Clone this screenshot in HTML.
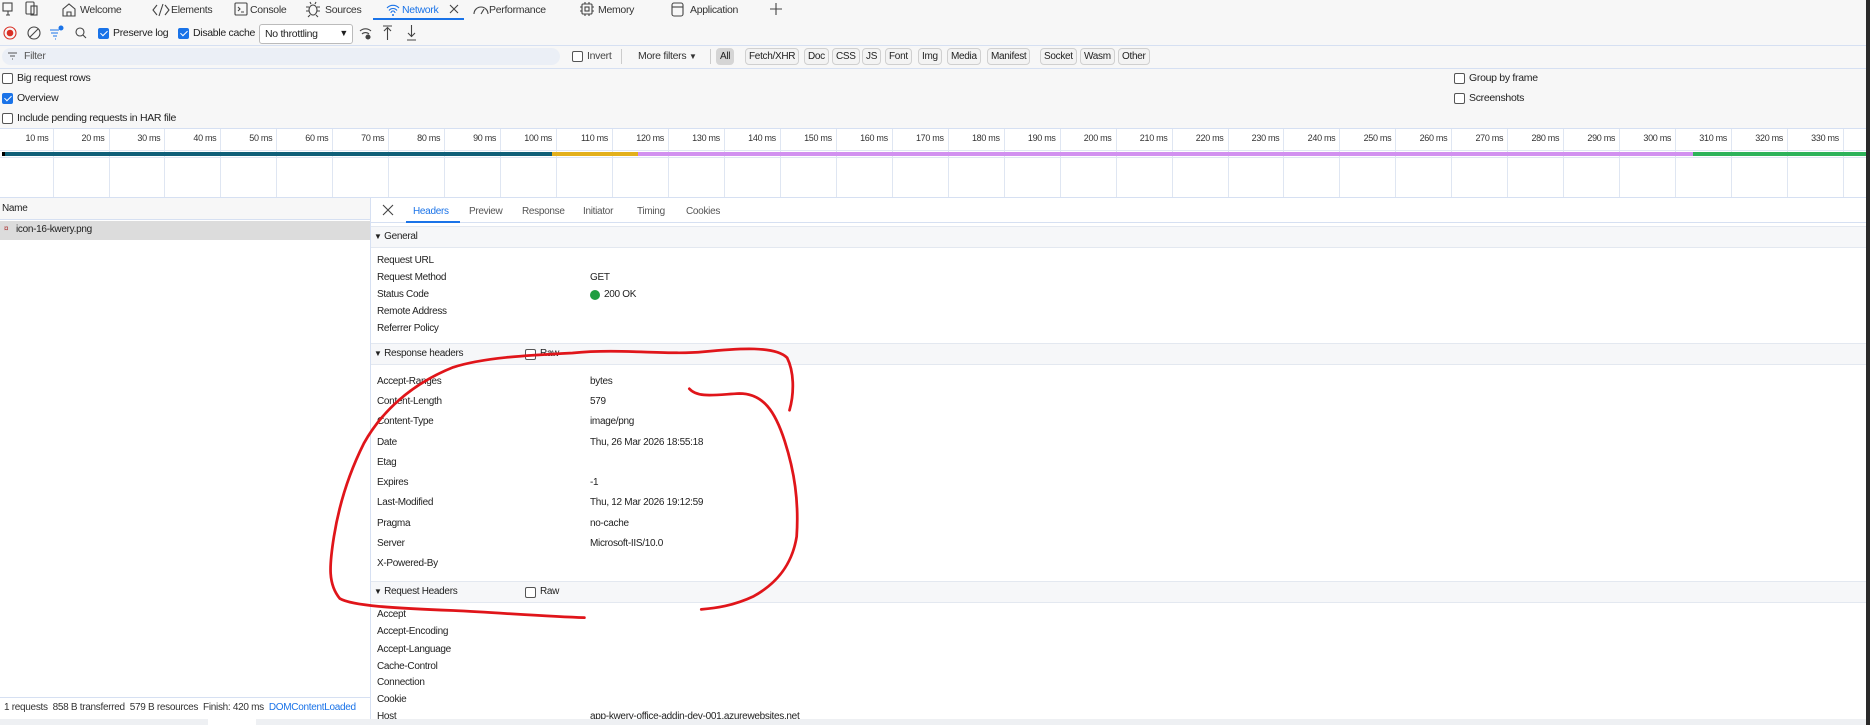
<!DOCTYPE html>
<html><head><meta charset="utf-8"><style>
*{box-sizing:border-box;margin:0;padding:0}
body{width:1870px;height:725px;overflow:hidden;background:#fff;font-family:"Liberation Sans",sans-serif;font-size:10.5px;color:#1f1f1f;position:relative;letter-spacing:-0.3px}
.a{position:absolute;white-space:nowrap}
.cb{position:absolute;width:11px;height:11px;border:1px solid #555;border-radius:2px;background:#fff}
.cbc{position:absolute;width:11px;height:11px;border-radius:2px;background:#1a73e8}
.cbc:after{content:"";position:absolute;left:3.5px;top:1px;width:3px;height:6px;border:solid #fff;border-width:0 1.6px 1.6px 0;transform:rotate(45deg)}
.fb{position:absolute;top:48px;height:17px;border:1px solid #d0d0d0;border-radius:4px;background:#f3f3f3;font-size:10px;line-height:15px;padding:0 3px;color:#222}
.lbl{position:absolute;left:377px;font-size:10px;color:#222}
.val{position:absolute;left:590px;font-size:10px;color:#222}
.sec{position:absolute;left:371px;right:4px;background:#f6f7f9;border-top:1px solid #e3e8f0;border-bottom:1px solid #e3e8f0}
</style></head><body>
<div class="a" style="left:0;top:0;width:1870px;height:129px;background:#f7f7f7"></div>
<div class="a" style="left:0;top:45px;width:1870px;height:1px;background:#d6e0f2"></div>
<div class="a" style="left:0;top:68px;width:1870px;height:1px;background:#d6e0f2"></div>
<div class="a" style="left:0;top:128px;width:1870px;height:1px;background:#d6e0f2"></div>

<svg class="a" style="left:0;top:0" width="800" height="22" fill="none" stroke="#444" stroke-width="1.1">
<rect x="3" y="3" width="9" height="8"/><path d="M8 11v4M6 15h4"/>
<rect x="26" y="2" width="8" height="12" rx="1"/><rect x="31" y="6" width="6" height="9"/>
<path d="M63 16V9l6-5 6 5v7zM67 16v-4h4v4"/>
<path d="M157 5l-4 5 4 5M165 5l4 5-4 5M163 4l-4 12"/>
<rect x="235" y="3" width="12" height="12" rx="1"/><path d="M238 7l2 2-2 2M241 12h3"/>
<ellipse cx="313" cy="10" rx="4" ry="5"/><path d="M309 7h-3M317 7h3M309 11h-3M317 11h3M310 15l-2 2M316 15l2 2M311 4l-1-2M315 4l1-2"/>
<path d="M387 8a8 8 0 0 1 12 0M389 10.5a5 5 0 0 1 8 0M391 13a2 2 0 0 1 4 0" stroke="#1a73e8"/><circle cx="393" cy="15" r="1" fill="#1a73e8" stroke="none"/>
<path d="M450 5l8 8M458 5l-8 8"/>
<path d="M474 14a7 7 0 0 1 14 0M481 14l3-5"/>
<rect x="582" y="4" width="10" height="10" rx="1"/><rect x="585" y="7" width="4" height="4"/><path d="M580 7h2M580 11h2M592 7h2M592 11h2M585 2v2M589 2v2M585 14v2M589 14v2"/>
<rect x="672" y="3" width="11" height="13" rx="2"/><path d="M672 7h11"/>
<path d="M776 3v12M770 9h12"/>
</svg>
<div class="a" style="left:80px;top:4px;color:#333">Welcome</div>
<div class="a" style="left:171px;top:4px;color:#333">Elements</div>
<div class="a" style="left:250px;top:4px;color:#333">Console</div>
<div class="a" style="left:325px;top:4px;color:#333">Sources</div>
<div class="a" style="left:402px;top:4px;color:#1a73e8">Network</div>
<div class="a" style="left:489px;top:4px;color:#333">Performance</div>
<div class="a" style="left:598px;top:4px;color:#333">Memory</div>
<div class="a" style="left:690px;top:4px;color:#333">Application</div>
<div class="a" style="left:373px;top:18px;width:91px;height:2px;background:#1a73e8"></div>

<svg class="a" style="left:0;top:22px" width="430" height="22" fill="none" stroke="#444" stroke-width="1.1">
<circle cx="10" cy="11" r="6" stroke="#d93025"/><circle cx="10" cy="11" r="3.3" fill="#d93025" stroke="none"/>
<circle cx="34" cy="11" r="6"/><path d="M30 15l8-8"/>
<path d="M50 8h9M51 11h7M53 14h4M55 17h1" stroke="#1a73e8"/><circle cx="61" cy="6" r="2.5" fill="#1a73e8" stroke="none"/>
<circle cx="80" cy="10" r="4"/><path d="M83 13l3 3"/>
<path d="M360 9a8 8 0 0 1 11 0M362 12a5 5 0 0 1 7 0"/><circle cx="368" cy="15" r="2" fill="#444"/>
<path d="M383 4h9M387.5 6v12M384 9l3.5-3.5 3.5 3.5"/>
<path d="M407 18h9M411.5 3v12M408 11l3.5 3.5 3.5-3.5"/>
</svg>
<div class="cbc" style="left:98px;top:28px"></div><div class="a" style="left:113px;top:27px">Preserve log</div>
<div class="cbc" style="left:178px;top:28px"></div><div class="a" style="left:193px;top:27px">Disable cache</div>
<div class="a" style="left:259px;top:24px;width:94px;height:20px;border:1px solid #bbb;border-radius:3px;background:#fff;padding:3px 5px">No throttling<span style="position:absolute;right:4px;top:3px;font-size:9px">▼</span></div>

<div class="a" style="left:2px;top:48px;width:558px;height:17px;background:#ebeff6;border-radius:9px"></div>
<svg class="a" style="left:7px;top:51px" width="12" height="10" stroke="#555" stroke-width="1.1"><path d="M1 2h9M3 5h5M5 8h1"/></svg>
<div class="a" style="left:24px;top:50px;color:#555">Filter</div>
<div class="cb" style="left:572px;top:51px"></div><div class="a" style="left:587px;top:50px;color:#444">Invert</div>
<div class="a" style="left:621px;top:49px;width:1px;height:15px;background:#ccc"></div>
<div class="a" style="left:638px;top:50px;color:#333">More filters <span style="font-size:8px">▼</span></div>
<div class="a" style="left:710px;top:49px;width:1px;height:15px;background:#ccc"></div>
<div class="fb" style="left:716px;background:#d5d5d5;border-color:#d5d5d5">All</div>
<div class="fb" style="left:745px">Fetch/XHR</div>
<div class="fb" style="left:804px">Doc</div>
<div class="fb" style="left:832px">CSS</div>
<div class="fb" style="left:862px">JS</div>
<div class="fb" style="left:885px">Font</div>
<div class="fb" style="left:918px">Img</div>
<div class="fb" style="left:947px">Media</div>
<div class="fb" style="left:987px">Manifest</div>
<div class="fb" style="left:1040px">Socket</div>
<div class="fb" style="left:1080px">Wasm</div>
<div class="fb" style="left:1118px">Other</div>

<div class="cb" style="left:2px;top:73px"></div><div class="a" style="left:17px;top:72px">Big request rows</div>
<div class="cbc" style="left:2px;top:93px"></div><div class="a" style="left:17px;top:92px">Overview</div>
<div class="cb" style="left:2px;top:113px"></div><div class="a" style="left:17px;top:112px">Include pending requests in HAR file</div>
<div class="cb" style="left:1454px;top:73px"></div><div class="a" style="left:1469px;top:72px">Group by frame</div>
<div class="cb" style="left:1454px;top:93px"></div><div class="a" style="left:1469px;top:92px">Screenshots</div>

<div id="tl"></div>
<div class="a" style="left:0;top:150px;width:1866px;height:1px;background:#dfe6f2"></div>
<div class="a" style="left:2px;top:152px;width:550px;height:4px;background:#0f5f78"></div>
<div class="a" style="left:2px;top:152px;width:3px;height:4px;background:#000"></div>
<div class="a" style="left:552px;top:152px;width:86px;height:4px;background:#e3b01d"></div>
<div class="a" style="left:638px;top:152px;width:1055px;height:4px;background:#d291f0"></div>
<div class="a" style="left:1693px;top:152px;width:173px;height:4px;background:#2eb35a"></div>
<div class="a" style="left:0;top:157px;width:1866px;height:1px;background:#dfe6f2"></div>
<div class="a" style="left:0;top:197px;width:1870px;height:1px;background:#d6e0f2"></div>
<div class="a" style="left:1866px;top:0;width:4px;height:725px;background:#2a2a2a"></div>

<div class="a" style="left:0;top:198px;width:371px;height:22px;background:#f7f7f7;border-bottom:1px solid #d6e0f2"></div>
<div class="a" style="left:2px;top:203px;font-size:10px">Name</div>
<div class="a" style="left:0;top:221px;width:371px;height:19px;background:#dcdcdc"></div>
<div class="a" style="left:4px;top:224px;font-size:8px;color:#a33">¤</div>
<div class="a" style="left:16px;top:224px;font-size:10px">icon-16-kwery.png</div>
<div class="a" style="left:0;top:697px;width:371px;height:1px;background:#d6e0f2"></div>
<div class="a" style="left:0;top:698px;width:371px;height:20px;background:#fff"></div>
<div class="a" style="left:4px;top:702px;font-size:10px;color:#333;width:366px;overflow:hidden">1 requests &nbsp;858 B transferred &nbsp;579 B resources &nbsp;Finish: 420 ms &nbsp;<span style="color:#1a73e8">DOMContentLoaded</span></div>
<div class="a" style="left:0;top:719px;width:1866px;height:6px;background:#eef0f3"></div>
<div class="a" style="left:208px;top:719px;width:48px;height:6px;background:#fff"></div>

<div class="a" style="left:370px;top:198px;width:1px;height:521px;background:#d6e0f2"></div>
<div class="a" style="left:371px;top:198px;width:1495px;height:25px;background:#fff;border-bottom:1px solid #d6e0f2"></div>
<svg class="a" style="left:382px;top:204px" width="12" height="12" stroke="#444" stroke-width="1.1"><path d="M1 1l10 10M11 1L1 11"/></svg>
<div class="a" style="left:413px;top:206px;color:#1a73e8;font-size:10px">Headers</div>
<div class="a" style="left:406px;top:221px;width:54px;height:2px;background:#1a73e8"></div>
<div class="a" style="left:469px;top:206px;color:#555;font-size:10px">Preview</div>
<div class="a" style="left:522px;top:206px;color:#555;font-size:10px">Response</div>
<div class="a" style="left:583px;top:206px;color:#555;font-size:10px">Initiator</div>
<div class="a" style="left:637px;top:206px;color:#555;font-size:10px">Timing</div>
<div class="a" style="left:686px;top:206px;color:#555;font-size:10px">Cookies</div>

<div class="sec" style="top:226px;height:22px"></div>
<div class="a" style="left:374px;top:231px;font-size:10px"><span style="font-size:8px">▼</span> General</div>
<div class="lbl" style="top:255px">Request URL</div>
<div class="lbl" style="top:272px">Request Method</div><div class="val" style="top:272px">GET</div>
<div class="lbl" style="top:289px">Status Code</div>
<div class="a" style="left:590px;top:290px;width:10px;height:10px;border-radius:50%;background:#1e9e3f"></div>
<div class="a" style="left:604px;top:289px;font-size:10px">200 OK</div>
<div class="lbl" style="top:306px">Remote Address</div>
<div class="lbl" style="top:323px">Referrer Policy</div>

<div class="sec" style="top:343px;height:22px"></div>
<div class="a" style="left:374px;top:348px;font-size:10px"><span style="font-size:8px">▼</span> Response headers</div>
<div class="cb" style="left:525px;top:349px"></div><div class="a" style="left:540px;top:348px;font-size:10px">Raw</div>
<div class="lbl" style="top:376px">Accept-Ranges</div><div class="val" style="top:376px">bytes</div>
<div class="lbl" style="top:396px">Content-Length</div><div class="val" style="top:396px">579</div>
<div class="lbl" style="top:416px">Content-Type</div><div class="val" style="top:416px">image/png</div>
<div class="lbl" style="top:437px">Date</div><div class="val" style="top:437px">Thu, 26 Mar 2026 18:55:18</div>
<div class="lbl" style="top:457px">Etag</div>
<div class="lbl" style="top:477px">Expires</div><div class="val" style="top:477px">-1</div>
<div class="lbl" style="top:497px">Last-Modified</div><div class="val" style="top:497px">Thu, 12 Mar 2026 19:12:59</div>
<div class="lbl" style="top:518px">Pragma</div><div class="val" style="top:518px">no-cache</div>
<div class="lbl" style="top:538px">Server</div><div class="val" style="top:538px">Microsoft-IIS/10.0</div>
<div class="lbl" style="top:558px">X-Powered-By</div>

<div class="sec" style="top:581px;height:22px"></div>
<div class="a" style="left:374px;top:586px;font-size:10px"><span style="font-size:8px">▼</span> Request Headers</div>
<div class="cb" style="left:525px;top:587px"></div><div class="a" style="left:540px;top:586px;font-size:10px">Raw</div>
<div class="lbl" style="top:609px">Accept</div>
<div class="lbl" style="top:626px">Accept-Encoding</div>
<div class="lbl" style="top:644px">Accept-Language</div>
<div class="lbl" style="top:661px">Cache-Control</div>
<div class="lbl" style="top:677px">Connection</div>
<div class="lbl" style="top:694px">Cookie</div>
<div class="lbl" style="top:711px">Host</div><div class="val" style="top:711px">app-kwery-office-addin-dev-001.azurewebsites.net</div>
<div class="a" style="left:371px;top:719px;width:1495px;height:6px;background:#eef0f3"></div>

<svg class="a" style="left:0;top:0" width="1870" height="725" viewBox="0 0 1568 608" preserveAspectRatio="none" fill="none" stroke="#e0151a" stroke-width="2.3" stroke-linecap="round">
<path d="M662 344 C666 330 666 312 660 300 C650 290 620 292 590 295 C560 298 520 292 480 296 C440 298 405 300 380 308 C345 322 320 345 305 372 C292 398 284 425 280 450 C276 475 275 490 285 502 C295 508 330 510 380 512 C420 514 460 517 490 518"/>
<path d="M578 326 C585 334 600 331 620 330 C640 330 650 345 658 370 C666 395 670 420 668 450 C664 475 650 490 632 500 C615 508 600 510 588 511"/>
</svg>

<script>
var h='';
for(var i=1;i<=33;i++){var x=52.5+(i-1)*55.95;
h+='<div class="a" style="left:'+x.toFixed(1)+'px;top:129px;width:1px;height:68px;background:#dfe6f2"></div>';
h+='<div class="a" style="left:'+(x-50).toFixed(1)+'px;top:133px;width:46px;text-align:right;font-size:9px;color:#333">'+(i*10)+' ms</div>';}
h='<div class="a" style="left:0;top:129px;width:1866px;height:68px;background:#fff"></div>'+h;
document.getElementById('tl').innerHTML=h;
</script>
</body></html>
